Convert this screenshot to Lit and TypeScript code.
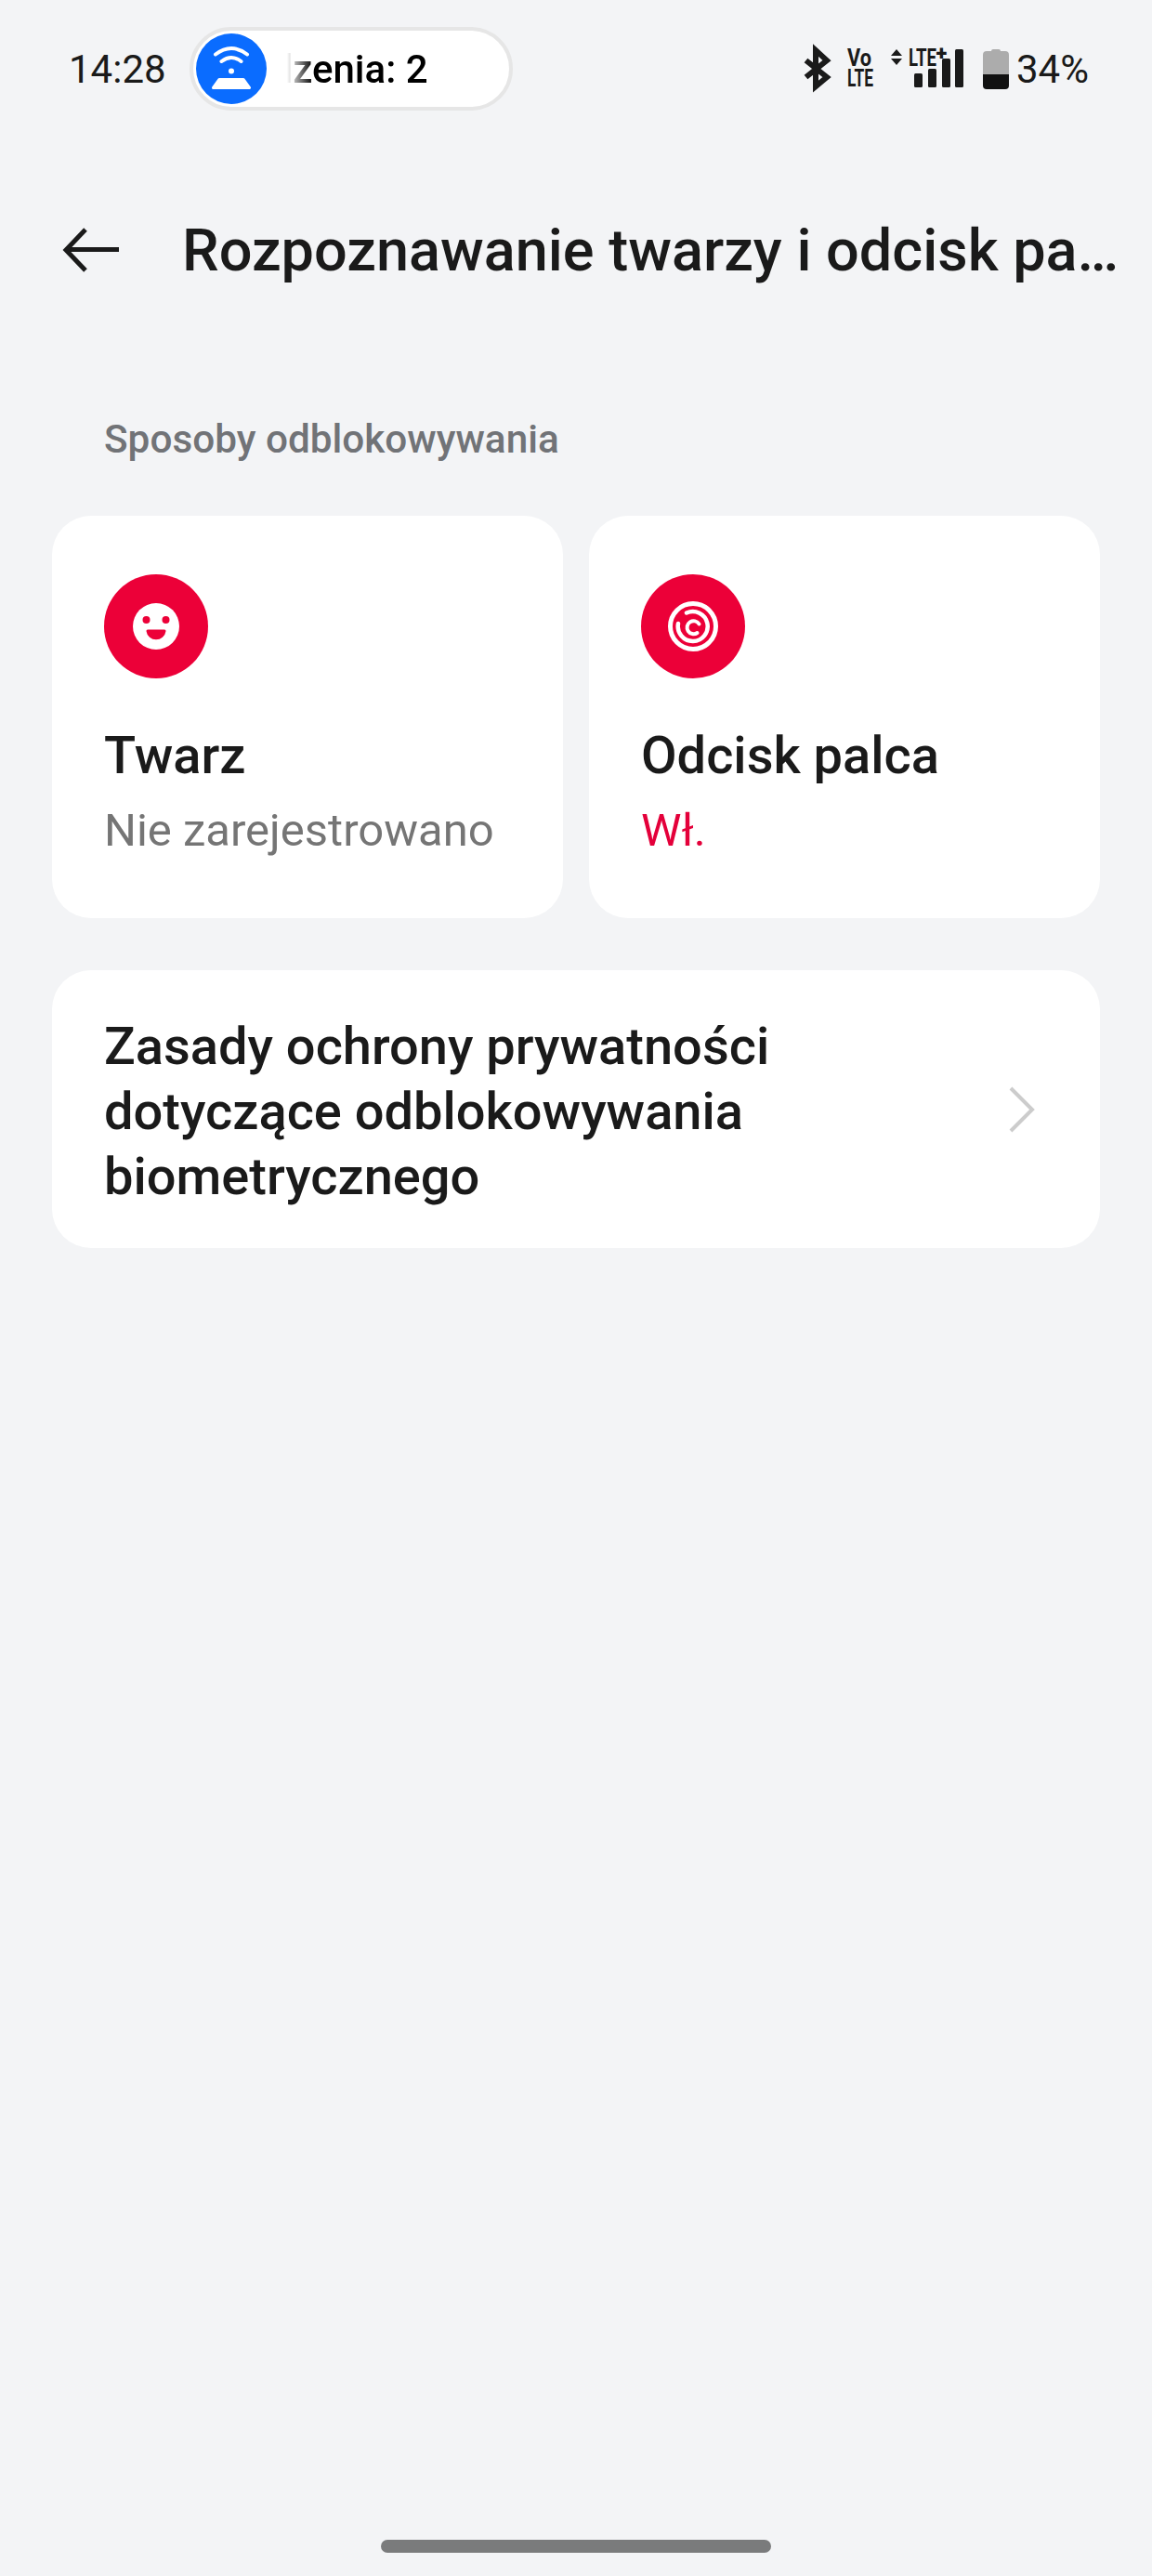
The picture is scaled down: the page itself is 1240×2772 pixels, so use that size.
import { LitElement, html, css, svg } from 'lit';
import { customElement } from 'lit/decorators.js';

const RED = '#ec0038';

const faceIcon = svg`
  <circle cx="56" cy="56" r="56" fill="${RED}"></circle>
  <circle cx="56" cy="56" r="25" fill="#fff"></circle>
  <circle cx="45.5" cy="49" r="4" fill="${RED}"></circle>
  <circle cx="66.5" cy="49" r="4" fill="${RED}"></circle>
  <path d="M47 59.5H65a1.5 1.5 0 0 1 1.5 1.7A10.6 10.6 0 0 1 45.5 61.2A1.5 1.5 0 0 1 47 59.5Z" fill="${RED}"></path>
`;

const fingerprintIcon = svg`
  <circle cx="56" cy="56" r="56" fill="${RED}"></circle>
  <g fill="none" stroke="#fff" stroke-linecap="round">
    <circle cx="56" cy="56" r="24.5" stroke-width="5"></circle>
    <path d="M49 41.5A16 16 0 1 1 40 53" stroke-width="4.5"></path>
    <path d="M62.5 53.500A7 7 0 1 0 60.500 63" stroke-width="4"></path>
  </g>
`;

const routerIcon = svg`
  <circle cx="38" cy="38" r="38" fill="#0a6cff"></circle>
  <g fill="none" stroke="#fff" stroke-width="4" stroke-linecap="round">
    <path d="M21 22.5Q38 9.5 55 22.5"></path>
    <path d="M27.5 30Q38 22 48.5 30"></path>
  </g>
  <circle cx="38" cy="40.5" r="3" fill="#fff"></circle>
  <path d="M25 49.5H51L57.5 58.5H18.5Z" fill="#fff" stroke="#fff" stroke-width="3" stroke-linejoin="round"></path>
`;

@customElement('app-root')
export class AppRoot extends LitElement {
  static styles = css`
    :host {
      display: block;
      font-family: Roboto, 'Liberation Sans', sans-serif;
      color: #1a1a1a;
    }
    .page {
      display: flex;
      flex-direction: column;
      min-height: 2772px;
      background: #f3f4f6;
      box-sizing: border-box;
    }

    .status {
      display: flex;
      align-items: center;
      height: 90px;
      margin-top: 29px;
      padding: 0 68px 0 74px;
    }
    .time,
    .battery-text {
      padding-top: 2px;
      font-size: 42px;
      line-height: 50px;
    }
    .pill {
      display: flex;
      align-items: center;
      box-sizing: border-box;
      width: 348px;
      height: 90px;
      margin-left: 25px;
      padding-left: 3px;
      background: #fff;
      border: 4px solid #e6e6e6;
      border-radius: 45px;
    }
    .pill svg {
      width: 76px;
      height: 76px;
      flex: none;
    }
    .pill-clip {
      display: flex;
      justify-content: flex-end;
      width: 152px;
      margin: 2px 0 0 22px;
      overflow: hidden;
      white-space: nowrap;
      font-size: 42px;
      font-weight: 500;
      line-height: 50px;
      color: #000;
      mask-image: linear-gradient(to right, transparent 0, #000 28px);
    }
    .status-icons {
      display: flex;
      align-items: center;
      margin-left: auto;
    }
    .status-icons svg {
      display: block;
      flex: none;
      overflow: visible;
    }
    .bt { width: 26px; height: 44px; }
    .volte { width: 30px; height: 42px; margin-left: 19px; }
    .signal { width: 80px; height: 44px; margin-left: 17px; }
    .batt { width: 28px; height: 44px; margin-left: 20px; }
    .battery-text { margin-left: 8px; }

    .app-bar {
      display: flex;
      align-items: center;
      height: 100px;
      margin-top: 100px;
      padding-left: 66px;
    }
    .app-bar svg {
      width: 64px;
      height: 48px;
      flex: none;
    }
    .title {
      flex: 1;
      min-width: 0;
      margin: 2px 34px 0 66px;
      overflow: hidden;
      white-space: nowrap;
      text-overflow: ellipsis;
      font-size: 63px;
      font-weight: 500;
      line-height: 80px;
    }

    .section-label {
      margin: 126px 0 54px 112px;
      font-size: 42.3px;
      font-weight: 500;
      line-height: 56px;
      color: #717377;
    }

    .methods {
      display: grid;
      grid-template-columns: 1fr 1fr;
      gap: 28px;
      padding: 0 56px;
    }
    .method {
      box-sizing: border-box;
      height: 433px;
      padding: 63px 56px 0;
      background: #fff;
      border-radius: 42px;
    }
    .method svg {
      display: block;
      width: 112px;
      height: 112px;
    }
    .method-name {
      margin-top: 48px;
      font-size: 56px;
      font-weight: 500;
      line-height: 70px;
    }
    .method-state {
      margin-top: 13px;
      font-size: 49px;
      line-height: 66px;
      color: #757575;
    }
    .method-state.on {
      color: #e4003a;
    }

    .policy {
      display: flex;
      align-items: center;
      box-sizing: border-box;
      height: 299px;
      margin: 56px 56px 0;
      padding: 0 70px 0 56px;
      background: #fff;
      border-radius: 42px;
    }
    .policy-text {
      flex: 1;
      padding-top: 5px;
      font-size: 56px;
      font-weight: 500;
      line-height: 70px;
    }
    .policy svg {
      width: 28px;
      height: 50px;
      flex: none;
    }

    .home-bar {
      width: 420px;
      height: 14px;
      margin: auto auto 25px;
      background: #7a7b7c;
      border-radius: 7px;
    }
  `;

  render() {
    return html`
      <div class="page">
        <div class="status">
          <span class="time">14:28</span>
          <div class="pill">
            <svg viewBox="0 0 76 76">${routerIcon}</svg>
            <div class="pill-clip"><span>dzenia: 2</span></div>
          </div>
          <div class="status-icons">
            <svg class="bt" viewBox="0 0 26 44">
              <path d="M1.5 13L24 31L12 41V2L24 13L1.5 31" fill="none" stroke="#1a1a1a" stroke-width="6"></path>
            </svg>
            <svg class="volte" viewBox="0 0 30 42">
              <text x="1" y="18" font-size="25" font-weight="700" fill="#1a1a1a" textLength="26" lengthAdjust="spacingAndGlyphs">Vo</text>
              <text x="1" y="40" font-size="25" font-weight="700" fill="#1a1a1a" textLength="28" lengthAdjust="spacingAndGlyphs">LTE</text>
            </svg>
            <svg class="signal" viewBox="0 0 80 44">
              <path d="M1 8L7 1L13 8Z M1 11L7 18L13 11Z" fill="#1a1a1a"></path>
              <text x="20" y="19" font-size="25" font-weight="700" fill="#1a1a1a" textLength="30" lengthAdjust="spacingAndGlyphs">LTE</text>
              <text x="49.5" y="13" font-size="22" font-weight="900" fill="#1a1a1a">+</text>
              <rect x="26" y="27" width="9" height="15" rx="1.5" fill="#1a1a1a"></rect>
              <rect x="41" y="22" width="9" height="20" rx="1.5" fill="#1a1a1a"></rect>
              <rect x="56" y="11" width="9" height="31" rx="1.5" fill="#1a1a1a"></rect>
              <rect x="70" y="1" width="9" height="41" rx="1.5" fill="#1a1a1a"></rect>
            </svg>
            <svg class="batt" viewBox="0 0 28 44">
              <path d="M9 3a2 2 0 0 1 2-2h6a2 2 0 0 1 2 2h5a4 4 0 0 1 4 4v29H0V7a4 4 0 0 1 4-4Z" fill="#acacac"></path>
              <path d="M0 28H28V40a4 4 0 0 1-4 4H4a4 4 0 0 1-4-4Z" fill="#111"></path>
            </svg>
            <span class="battery-text">34%</span>
          </div>
        </div>

        <div class="app-bar">
          <svg viewBox="0 0 64 48" fill="none" stroke="#1a1a1a" stroke-width="5">
            <path d="M62 23.5H6"></path>
            <path d="M26 2L5 24L26 46"></path>
          </svg>
          <div class="title">Rozpoznawanie twarzy i odcisk palca</div>
        </div>

        <div class="section-label">Sposoby odblokowywania</div>

        <div class="methods">
          <div class="method">
            <svg viewBox="0 0 112 112">${faceIcon}</svg>
            <div class="method-name">Twarz</div>
            <div class="method-state">Nie zarejestrowano</div>
          </div>
          <div class="method">
            <svg viewBox="0 0 112 112">${fingerprintIcon}</svg>
            <div class="method-name">Odcisk palca</div>
            <div class="method-state on">Wł.</div>
          </div>
        </div>

        <div class="policy">
          <div class="policy-text">Zasady ochrony prywatności<br>dotyczące odblokowywania<br>biometrycznego</div>
          <svg viewBox="0 0 28 50" fill="none" stroke="#cccccc" stroke-width="4">
            <path d="M2 2L25 25L2 48"></path>
          </svg>
        </div>

        <div class="home-bar"></div>
      </div>
    `;
  }
}
